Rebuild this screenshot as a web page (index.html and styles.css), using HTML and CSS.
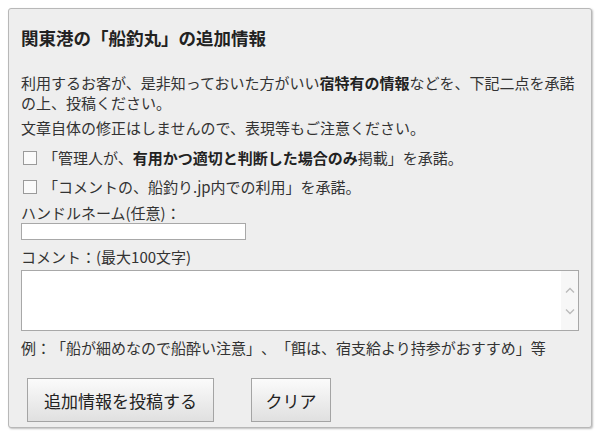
FILE: index.html
```html
<!DOCTYPE html>
<html lang="ja">
<head>
  <meta charset="UTF-8">
  <title>追加情報</title>
  <link rel="stylesheet" href="styles.css">
</head>
<body>
  <div class="panel">
    <h2 class="panel-title">関東港の「船釣丸」の追加情報</h2>

    <p class="lead">利用するお客が、是非知っておいた方がいい<b>宿特有の情報</b>などを、下記二点を承諾の上、投稿ください。</p>
    <p class="note">文章自体の修正はしませんので、表現等もご注意ください。</p>

    <label class="agree first"><input type="checkbox">「管理人が、<b>有用かつ適切と判断した場合のみ</b>掲載」を承諾。</label>
    <label class="agree"><input type="checkbox">「コメントの、船釣り.jp内での利用」を承諾。</label>

    <div class="field-label">ハンドルネーム(任意)：</div>
    <input class="handle" type="text">

    <div class="field-label comment-label">コメント：(最大100文字)</div>
    <div class="comment-box">
      <textarea class="comment"></textarea>
      <div class="scroll">
        <svg width="10" height="6" viewBox="0 0 10 6"><path d="M1 5.5 L5 1.5 L9 5.5" fill="none" stroke="#bbb" stroke-width="1.3"/></svg>
        <svg width="10" height="6" viewBox="0 0 10 6"><path d="M1 0.5 L5 4.5 L9 0.5" fill="none" stroke="#bbb" stroke-width="1.3"/></svg>
      </div>
    </div>

    <p class="example">例：「船が細めなので船酔い注意」、「餌は、宿支給より持参がおすすめ」等</p>

    <div class="buttons">
      <button class="btn btn-post" type="button">追加情報を投稿する</button>
      <button class="btn btn-clear" type="button">クリア</button>
    </div>
  </div>
</body>
</html>
```

FILE: styles.css
```css
body {
  margin: 0;
  background: #fff;
  font-family: "Noto Sans CJK JP", "Noto Sans", sans-serif;
  color: #333;
  text-spacing-trim: space-all;
}

.panel {
  margin: 8px;
  width: 584px;
  height: 420px;
  box-sizing: border-box;
  padding: 17px 13px 0 12px;
  background: #eeeeee;
  border: 1px solid #b8b8b8;
  border-radius: 3px;
  box-shadow: 1px 1px 2px rgba(0, 0, 0, 0.25);
}

.panel-title {
  margin: 0;
  font-size: 17.5px;
  line-height: 24px;
  font-weight: bold;
  color: #222;
}

.lead,
.note,
.example {
  margin: 0;
  font-size: 15px;
  line-height: 20px;
}

.lead {
  margin-top: 23px;
}

.note {
  margin-top: 5px;
}

b {
  color: #222;
}

.agree {
  display: flex;
  align-items: center;
  height: 29px;
  font-size: 15px;
}

.agree.first {
  margin-top: 5px;
}

.agree input {
  appearance: none;
  width: 14px;
  height: 14px;
  margin: 0 6px 0 2px;
  border: 1px solid #9a9a9a;
  background: #fafafa;
  flex: none;
}

.field-label {
  margin-top: 2px;
  font-size: 15px;
  line-height: 20px;
}

.handle {
  display: block;
  width: 225px;
  height: 17px;
  box-sizing: border-box;
  margin: 0;
  border: 1px solid #a8a8a8;
  background: #fff;
  padding: 0 2px;
}

.comment-label {
  margin-top: 7px;
}

.comment-box {
  display: flex;
  margin-top: 3px;
  width: 558px;
  height: 61px;
  box-sizing: border-box;
  border: 1px solid #a8a8a8;
  background: #fff;
}

.comment {
  flex: 1;
  border: none;
  margin: 0;
  padding: 2px;
  resize: none;
  outline: none;
  background: #fff;
}

.scroll {
  width: 17px;
  background: #f7f7f7;
  display: flex;
  flex-direction: column;
  align-items: center;
  justify-content: space-between;
  padding: 16px 0 15px;
  box-sizing: border-box;
}

.example {
  margin-top: 7px;
}

.buttons {
  display: flex;
  gap: 37px;
  margin: 20px 0 0 6px;
}

.btn {
  height: 44px;
  margin: 0;
  padding: 0;
  border: 1px solid #a4a4a4;
  border-radius: 0;
  background: linear-gradient(#fbfbfb, #e0e0e0);
  font-family: inherit;
  font-size: 17px;
  color: #222;
}

.btn-post {
  width: 187px;
}

.btn-clear {
  width: 80px;
}
```
